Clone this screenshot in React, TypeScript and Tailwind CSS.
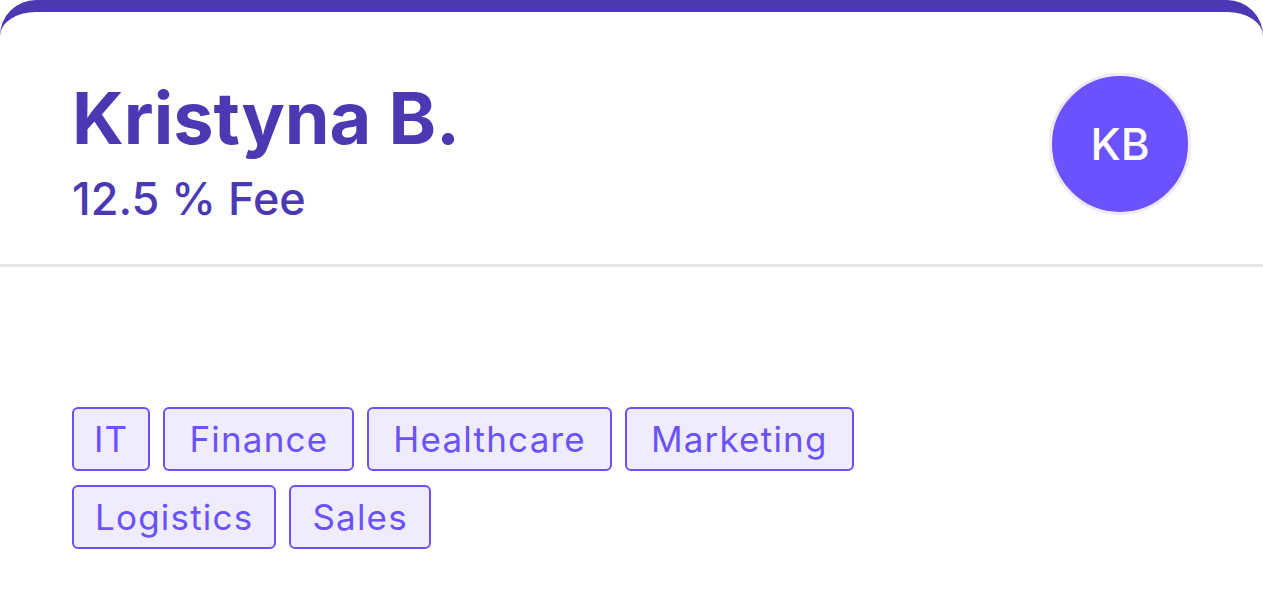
import React from "react";

const tags1 = ["IT", "Finance", "Healthcare", "Marketing"];
const tags2 = ["Logistics", "Sales"];

function Tag({ label }: { label: string }) {
  const pad = label === "IT" ? "px-[20px]" : label === "Logistics" || label === "Sales" ? "px-[21px]" : "px-[24px]";
  return (
    <div className={`h-[64px] ${pad} flex items-center rounded-[6px] border-2 border-[#6B52FF] bg-[#EFECFD] text-[#6B52FF] text-[35px] tracking-[1.2px] leading-none`}>
      {label}
    </div>
  );
}

export default function App() {
  return (
    <div className="w-[1263px] h-[603px] bg-white overflow-hidden" style={{ fontFamily: "Inter, 'Open Sans', sans-serif" }}>
      <div className="border-t-[12px] border-[#4B38B3] rounded-t-[36px] bg-white h-full">
        <div className="h-[252px] px-[72px] flex justify-between items-start">
          <div className="flex flex-col pt-[70px]">
            <div className="text-[72px] font-bold leading-none text-[#4B38B3]">Kristyna B.</div>
            <div className="text-[45px] font-medium leading-none text-[#4B38B3] mt-[22px]">12.5 % Fee</div>
          </div>
          <div className="mt-[61px] w-[142px] h-[142px] rounded-full border-[3px] border-[#EEEAFD] bg-[#6B52FF] flex items-center justify-center text-white text-[44px] font-medium">
            KB
          </div>
        </div>
        <div className="h-[3px] bg-[#E5E5E5]" />
        <div className="px-[72px] pt-[140px] flex flex-col gap-[14px]">
          <div className="flex gap-[13px]">
            {tags1.map((t) => (
              <Tag key={t} label={t} />
            ))}
          </div>
          <div className="flex gap-[13px]">
            {tags2.map((t) => (
              <Tag key={t} label={t} />
            ))}
          </div>
        </div>
      </div>
    </div>
  );
}
